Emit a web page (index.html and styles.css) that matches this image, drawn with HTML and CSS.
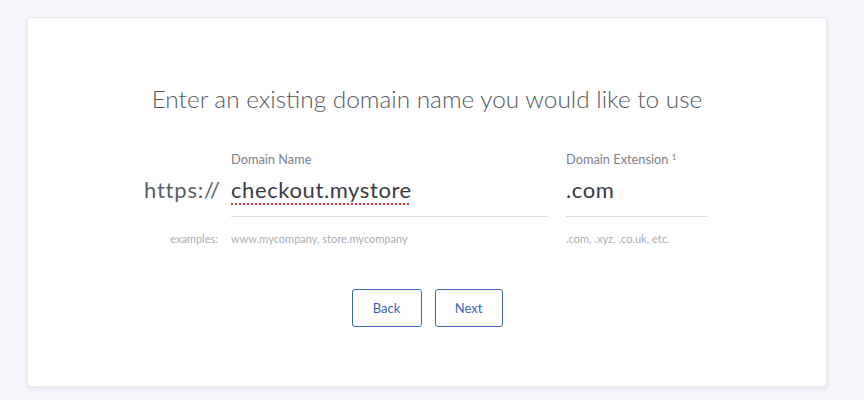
FILE: index.html
```html
<!DOCTYPE html>
<html>
<head>
<meta charset="utf-8">
<link rel="stylesheet" href="styles.css">
</head>
<body>
<div class="card">
  <h1 class="title">Enter an existing domain name you would like to use</h1>
  <div class="form">
    <div class="cell"></div>
    <div class="label">Domain Name</div>
    <div class="label">Domain Extension <sup class="sup">1</sup></div>

    <div class="prefix">https://</div>
    <div class="field"><span class="value spell">checkout.mystore</span></div>
    <div class="field"><span class="value">.com</span></div>

    <div class="hint hint-right">examples:</div>
    <div class="hint">www.mycompany, store.mycompany</div>
    <div class="hint">.com, .xyz, .co.uk, etc.</div>
  </div>
  <div class="actions">
    <button class="btn btn-back">Back</button>
    <button class="btn btn-next">Next</button>
  </div>
</div>
</body>
</html>
```

FILE: styles.css
```css
html, body {
  margin: 0;
  padding: 0;
  background: #f5f6fb;
  font-family: Lato, "Open Sans", sans-serif;
}
body {
  padding: 17px 37px 13px 27px;
}
.card {
  width: 800px;
  height: 370px;
  box-sizing: border-box;
  background: #fff;
  border-radius: 4px;
  border: 1px solid #e6e7ec;
  box-shadow: 0 2px 4px rgba(40, 45, 80, 0.10);
  padding-top: 66px;
  display: flex;
  flex-direction: column;
  align-items: center;
}
.title {
  margin: 0;
  font-weight: 300;
  font-size: 24.4px;
  line-height: 30px;
  color: #555a60;
}
.form {
  margin-top: 37px;
  margin-left: -3px;
  display: grid;
  grid-template-columns: 74px 317px 146px;
  column-gap: 13px;
}
.form > :nth-child(3n) { margin-left: 5px; }
.label {
  font-size: 12.8px;
  line-height: 16px;
  color: #7d8288;
}
.sup {
  font-size: 8px;
  vertical-align: top;
  position: relative;
  top: -2px;
}
.prefix {
  font-size: 22px;
  line-height: 30px;
  padding-top: 8px;
  color: #5a5f66;
  text-align: right;
  letter-spacing: 0.8px;
}
.field {
  border-bottom: 1px solid #dcdde0;
  padding-top: 8px;
  padding-bottom: 11px;
}
.value {
  font-size: 22px;
  line-height: 30px;
  color: #383c41;
  letter-spacing: 0.6px;
}
.spell {
  text-decoration: underline dotted #e23a3a;
  text-decoration-thickness: 2px;
  text-underline-offset: 5px;
}
.hint {
  font-size: 11px;
  line-height: 14px;
  margin-top: 15px;
  color: #aaaeb3;
}
.hint-right { text-align: right; }
.actions {
  margin-top: 43px;
  display: flex;
  gap: 13px;
}
.btn {
  height: 38px;
  background: #fff;
  border: 1px solid #3d63b8;
  border-radius: 3px;
  color: #3d63b8;
  font-family: inherit;
  font-size: 13px;
  padding: 0;
}
.btn-back { width: 70px; }
.btn-next { width: 68px; }
```
